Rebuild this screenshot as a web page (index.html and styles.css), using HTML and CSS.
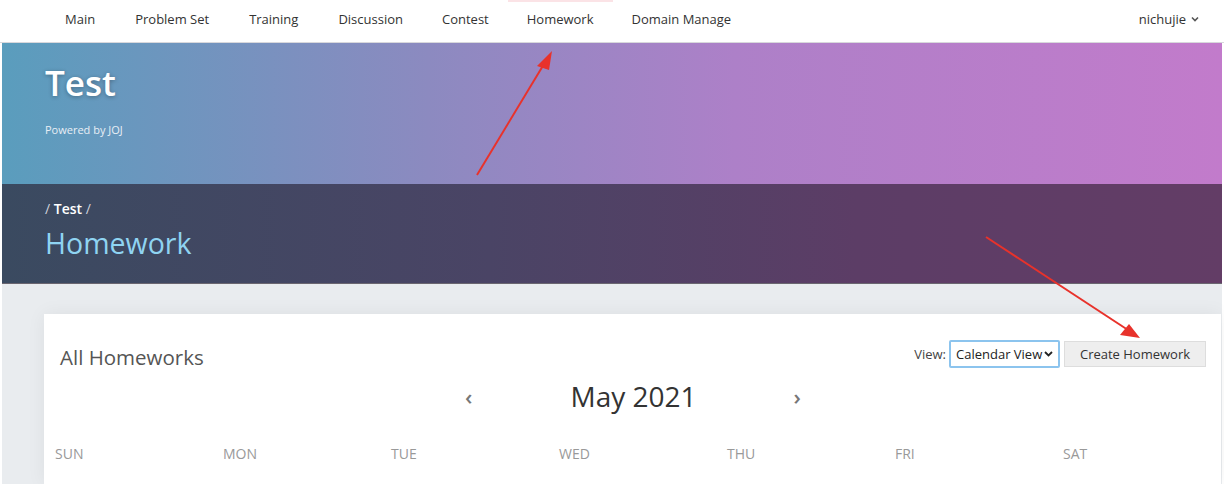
FILE: index.html
```html
<!DOCTYPE html>
<html>
<head>
<meta charset="utf-8">
<link rel="stylesheet" href="styles.css">
</head>
<body>
<div class="page">
  <nav class="nav">
    <ul class="nav-list">
      <li class="nav-item">Main</li>
      <li class="nav-item">Problem Set</li>
      <li class="nav-item">Training</li>
      <li class="nav-item">Discussion</li>
      <li class="nav-item">Contest</li>
      <li class="nav-item active">Homework</li>
      <li class="nav-item">Domain Manage</li>
    </ul>
    <div class="nav-user">nichujie <svg class="caret" width="8" height="6" viewBox="0 0 8 6"><path d="M1 1.5 L4 4.5 L7 1.5" fill="none" stroke="#555" stroke-width="1.6"/></svg></div>
  </nav>
  <header class="hero">
    <h1 class="hero-title">Test</h1>
    <div class="hero-sub">Powered by JOJ</div>
  </header>
  <section class="band">
    <div class="crumbs"><span class="sep">/</span> <b>Test</b> <span class="sep">/</span></div>
    <h2 class="band-title">Homework</h2>
  </section>
  <main class="main">
    <div class="panel">
      <div class="panel-head">
        <h3 class="panel-title">All Homeworks</h3>
        <div class="controls">
          <label class="view-label">View:</label>
          <div class="select">Calendar View <svg width="9" height="6" viewBox="0 0 9 6"><path d="M1 1 L4.5 4.5 L8 1" fill="none" stroke="#222" stroke-width="1.8"/></svg></div>
          <button class="btn">Create Homework</button>
        </div>
      </div>
      <div class="cal-head">
        <span class="chev">‹</span>
        <span class="month">May 2021</span>
        <span class="chev">›</span>
      </div>
      <div class="weekdays">
        <div>SUN</div><div>MON</div><div>TUE</div><div>WED</div><div>THU</div><div>FRI</div><div>SAT</div>
      </div>
    </div>
  </main>
  <svg class="annot" width="1224" height="484" viewBox="0 0 1224 484">
    <line x1="477" y1="175" x2="544" y2="64" stroke="#e8322b" stroke-width="2"/>
    <polygon points="552,51 537,66 549,70" fill="#e8322b"/>
    <line x1="986" y1="237" x2="1128" y2="330" stroke="#e8322b" stroke-width="2"/>
    <polygon points="1140,338 1120,335 1129,324" fill="#e8322b"/>
  </svg>
</div>
</body>
</html>
```

FILE: styles.css
```css
* { box-sizing: border-box; }
body {
  margin: 0;
  font-family: "Open Sans", "Noto Sans", sans-serif;
  background: #fff;
  color: #333;
}
.page {
  position: relative;
  width: 1224px;
  height: 484px;
  overflow: hidden;
  padding: 0 2px;
}
.nav {
  height: 43px;
  display: flex;
  align-items: flex-start;
  justify-content: space-between;
  background: #fff;
  border-bottom: 1px solid #d8d8dc;
  padding: 0 25px 0 45px;
  margin: 0 -2px;
}
.nav-list {
  list-style: none;
  margin: 0;
  padding: 0;
  display: flex;
}
.nav-item {
  padding: 0 20px 0 20px;
  font-size: 13px;
  color: #333;
  line-height: 38px;
}
.nav-item:nth-child(n+5) { padding: 0 19px; }
.nav-item.active {
  box-shadow: inset 0 2px 0 #fbe3e6;
}
.nav-user {
  font-size: 13px;
  color: #333;
  display: flex;
  align-items: center;
  gap: 5px;
  height: 38px;
}
.hero {
  height: 141px;
  background: linear-gradient(90deg, #5a9dbd 0%, #8c8ac0 35%, #ad80c8 60%, #c27bcb 100%);
  padding: 18px 0 0 43px;
}
.hero-title {
  margin: 0;
  font-size: 35px;
  font-weight: 600;
  color: #fff;
  line-height: 44px;
  text-shadow: 0 1px 4px rgba(0,0,0,0.3);
}
.hero-sub {
  margin-top: 17px;
  font-size: 11px;
  color: #e8eef5;
}
.band {
  height: 100px;
  background: linear-gradient(90deg, #3a4a60 0%, #4a4465 40%, #5c3d66 70%, #633d66 100%);
  padding: 15px 0 0 43px;
  border-bottom: 1px solid #6a6670;
}
.crumbs {
  font-size: 14px;
  color: #cfd2dc;
  line-height: 20px;
}
.crumbs b { color: #fff; font-weight: 600; }
.band-title {
  margin: 4px 0 0;
  font-size: 28.5px;
  font-weight: 400;
  color: #8fd4f2;
  line-height: 40px;
}
.main {
  background: #e9ecef;
  padding: 30px 1px 0 42px;
  height: 200px;
}
.panel {
  background: #fff;
  height: 170px;
  box-shadow: 0 0 18px rgba(0,0,0,0.06);
  padding: 0 15px 0 16px;
}
.panel-head {
  display: flex;
  align-items: center;
  justify-content: space-between;
  padding-top: 22px;
}
.panel-title {
  margin: 7px 0 0;
  font-size: 20.5px;
  font-weight: 400;
  color: #555;
}
.controls {
  display: flex;
  align-items: center;
}
.view-label {
  font-size: 13px;
  color: #444;
  margin-right: 3px;
}
.select {
  width: 111px;
  height: 28px;
  border: 2px solid #8cc4ee;
  border-radius: 2px;
  font-size: 13px;
  color: #222;
  display: flex;
  align-items: center;
  justify-content: space-between;
  padding: 0 5px 0 5px;
  background: #fff;
}
.btn {
  margin-left: 4px;
  height: 26px;
  width: 142px;
  background: #eeeeee;
  border: 1px solid #dddddd;
  font-family: inherit;
  font-size: 13px;
  color: #333;
  padding: 0;
}
.cal-head {
  display: flex;
  justify-content: center;
  align-items: center;
  margin-top: 5px;
}
.month {
  font-size: 28px;
  color: #333;
  margin: 0 97px 0 98px;
  line-height: 40px;
}
.chev {
  font-size: 22px;
  color: #777;
  font-weight: 600;
  line-height: 22px;
}
.weekdays {
  display: grid;
  grid-template-columns: repeat(7, 168px);
  margin-top: 28px;
  margin-left: -5px;
  font-size: 14px;
  color: #999;
}
.annot {
  position: absolute;
  left: 0;
  top: 0;
  pointer-events: none;
}
```
